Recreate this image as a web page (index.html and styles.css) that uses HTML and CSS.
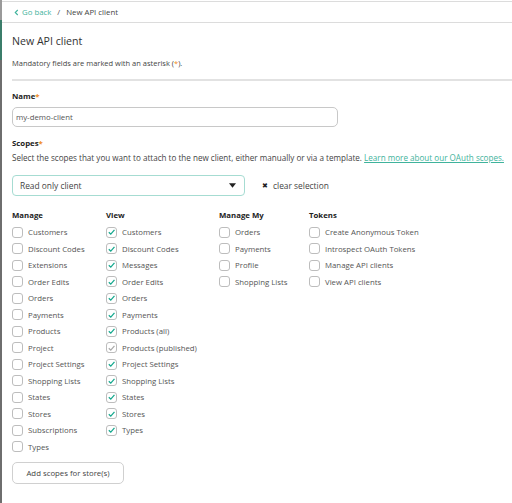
FILE: index.html
```html
<!DOCTYPE html>
<html>
<head>
<meta charset="utf-8">
<link rel="stylesheet" href="styles.css">
</head>
<body>
<div class="frame">
  <div class="edge"></div>
  <div class="page">
    <div class="top">
      <span class="back"><svg class="chev" viewBox="0 0 6 8" width="5" height="7"><path d="M4.5 1 L1.5 4 L4.5 7" fill="none" stroke="#3fb39c" stroke-width="1.3"/></svg>Go back</span>
      <span class="sep">/</span>
      <span class="crumb">New API client</span>
    </div>
    <div class="main">
      <h1 class="title">New API client</h1>
      <p class="note">Mandatory fields are marked with an asterisk (<span class="ast">*</span>).</p>
      <div class="rule"></div>
      <div class="label">Name<span class="ast">*</span></div>
      <div class="input">my-demo-client</div>
      <div class="label scopes">Scopes<span class="ast">*</span></div>
      <p class="desc">Select the scopes that you want to attach to the new client, either manually or via a template. <a class="link">Learn more about our OAuth scopes.</a></p>
      <div class="selrow">
        <div class="select"><span>Read only client</span><svg viewBox="0 0 8 5" width="7" height="5"><path d="M0 0 H8 L4 5 Z" fill="#222"/></svg></div>
        <div class="clear"><span class="x">✖</span>clear selection</div>
      </div>
      <div class="grid">
        <div class="col">
          <div class="head">Manage</div>
          <div class="row"><i class="cb"></i>Customers</div>
          <div class="row"><i class="cb"></i>Discount Codes</div>
          <div class="row"><i class="cb"></i>Extensions</div>
          <div class="row"><i class="cb"></i>Order Edits</div>
          <div class="row"><i class="cb"></i>Orders</div>
          <div class="row"><i class="cb"></i>Payments</div>
          <div class="row"><i class="cb"></i>Products</div>
          <div class="row"><i class="cb"></i>Project</div>
          <div class="row"><i class="cb"></i>Project Settings</div>
          <div class="row"><i class="cb"></i>Shopping Lists</div>
          <div class="row"><i class="cb"></i>States</div>
          <div class="row"><i class="cb"></i>Stores</div>
          <div class="row"><i class="cb"></i>Subscriptions</div>
          <div class="row"><i class="cb"></i>Types</div>
        </div>
        <div class="col">
          <div class="head">View</div>
          <div class="row"><i class="cb on"><svg viewBox="0 0 10 10"><path d="M2 5.2 L4.2 7.4 L8.3 2.6"/></svg></i>Customers</div>
          <div class="row"><i class="cb on"><svg viewBox="0 0 10 10"><path d="M2 5.2 L4.2 7.4 L8.3 2.6"/></svg></i>Discount Codes</div>
          <div class="row"><i class="cb on"><svg viewBox="0 0 10 10"><path d="M2 5.2 L4.2 7.4 L8.3 2.6"/></svg></i>Messages</div>
          <div class="row"><i class="cb on"><svg viewBox="0 0 10 10"><path d="M2 5.2 L4.2 7.4 L8.3 2.6"/></svg></i>Order Edits</div>
          <div class="row"><i class="cb on"><svg viewBox="0 0 10 10"><path d="M2 5.2 L4.2 7.4 L8.3 2.6"/></svg></i>Orders</div>
          <div class="row"><i class="cb on"><svg viewBox="0 0 10 10"><path d="M2 5.2 L4.2 7.4 L8.3 2.6"/></svg></i>Payments</div>
          <div class="row"><i class="cb on"><svg viewBox="0 0 10 10"><path d="M2 5.2 L4.2 7.4 L8.3 2.6"/></svg></i>Products (all)</div>
          <div class="row"><i class="cb dis"><svg viewBox="0 0 10 10"><path d="M2 5.2 L4.2 7.4 L8.3 2.6"/></svg></i>Products (published)</div>
          <div class="row"><i class="cb on"><svg viewBox="0 0 10 10"><path d="M2 5.2 L4.2 7.4 L8.3 2.6"/></svg></i>Project Settings</div>
          <div class="row"><i class="cb on"><svg viewBox="0 0 10 10"><path d="M2 5.2 L4.2 7.4 L8.3 2.6"/></svg></i>Shopping Lists</div>
          <div class="row"><i class="cb on"><svg viewBox="0 0 10 10"><path d="M2 5.2 L4.2 7.4 L8.3 2.6"/></svg></i>States</div>
          <div class="row"><i class="cb on"><svg viewBox="0 0 10 10"><path d="M2 5.2 L4.2 7.4 L8.3 2.6"/></svg></i>Stores</div>
          <div class="row"><i class="cb on"><svg viewBox="0 0 10 10"><path d="M2 5.2 L4.2 7.4 L8.3 2.6"/></svg></i>Types</div>
        </div>
        <div class="col">
          <div class="head">Manage My</div>
          <div class="row"><i class="cb"></i>Orders</div>
          <div class="row"><i class="cb"></i>Payments</div>
          <div class="row"><i class="cb"></i>Profile</div>
          <div class="row"><i class="cb"></i>Shopping Lists</div>
        </div>
        <div class="col">
          <div class="head">Tokens</div>
          <div class="row"><i class="cb"></i>Create Anonymous Token</div>
          <div class="row"><i class="cb"></i>Introspect OAuth Tokens</div>
          <div class="row"><i class="cb"></i>Manage API clients</div>
          <div class="row"><i class="cb"></i>View API clients</div>
        </div>
      </div>
      <div class="btn">Add scopes for store(s)</div>
    </div>
  </div>
</div>
</body>
</html>
```

FILE: styles.css
```css
* { box-sizing: border-box; }
html, body { margin: 0; padding: 0; background: #fff; }
body {
  font-family: "Open Sans", "Noto Sans", sans-serif;
  font-size: 7.8px;
  color: #444;
  width: 512px;
  height: 503px;
  overflow: hidden;
}
.frame { display: flex; height: 503px; }
.edge {
  width: 2px;
  flex: none;
  background: linear-gradient(to bottom, #9a9a9a 0, #9a9a9a 20px, #3b7d6a 20px, #3b7d6a 60px, #6e6e6e 60px, #6e6e6e 100%);
}
.page { flex: 1; min-width: 0; }
.top {
  margin-top: 1px;
  height: 22px;
  border-top: 1px solid #dcdcdc;
  border-bottom: 1px solid #dcdcdc;
  display: flex;
  align-items: center;
  padding-left: 12px;
  font-size: 7.8px;
}
.back { color: #3fb39c; display: flex; align-items: center; }
.chev { margin-right: 3px; }
.sep { margin: 0 6px; color: #555; }
.crumb { color: #444; }
.main { padding-left: 10px; }
.title {
  margin: 10px 0 0;
  font-size: 10.6px;
  font-weight: 400;
  line-height: 17px;
  color: #333;
}
.note { margin: 7px 0 0; line-height: 13px; color: #444; font-size: 7.5px; }
.ast { color: #f08a24; }
.rule { margin-top: 9px; height: 2px; background: #e2e2e2; }
.label { margin-top: 9px; font-weight: 700; line-height: 13px; color: #222; }
.input {
  margin-top: 4px;
  width: 326px;
  height: 20px;
  border: 1px solid #c8c8c8;
  border-radius: 5px;
  padding-left: 3px;
  display: flex;
  align-items: center;
  color: #555;
}
.label.scopes { margin-top: 10px; }
.desc { margin: 1px 0 0; line-height: 13px; color: #444; white-space: nowrap; font-size: 8.1px; }
.link { color: #3fb39c; text-decoration: underline; }
.selrow { margin-top: 11px; display: flex; align-items: center; }
.select {
  width: 233px;
  height: 21px;
  border: 1px solid #a6dcd2;
  border-radius: 4px;
  padding: 0 8px 0 7px;
  display: flex;
  align-items: center;
  justify-content: space-between;
  color: #444;
  font-size: 8.4px;
}
.clear { margin-left: 17px; display: flex; align-items: center; color: #444; font-size: 8.4px; }
.x { font-size: 6.5px; margin-right: 5px; color: #222; }
.grid {
  margin-top: 13px;
  display: grid;
  grid-template-columns: 94px 113px 90px auto;
}
.head { font-weight: 700; line-height: 13px; color: #222; margin-bottom: 2px; }
.row { height: 16.5px; display: flex; align-items: center; color: #555; }
.cb {
  width: 11px;
  height: 11px;
  border: 1px solid #bdbdbd;
  border-radius: 3px;
  margin-right: 5px;
  flex: none;
  display: flex;
  align-items: center;
  justify-content: center;
}
.cb svg { width: 10px; height: 10px; }
.cb svg path { fill: none; stroke: #16a88e; stroke-width: 1.4; }
.cb.dis svg path { stroke: #aaa; }
.btn {
  margin-top: 7px;
  width: 112px;
  height: 22px;
  border: 1px solid #d0d0d0;
  border-radius: 5px;
  display: flex;
  align-items: center;
  justify-content: center;
  color: #444;
}
```
